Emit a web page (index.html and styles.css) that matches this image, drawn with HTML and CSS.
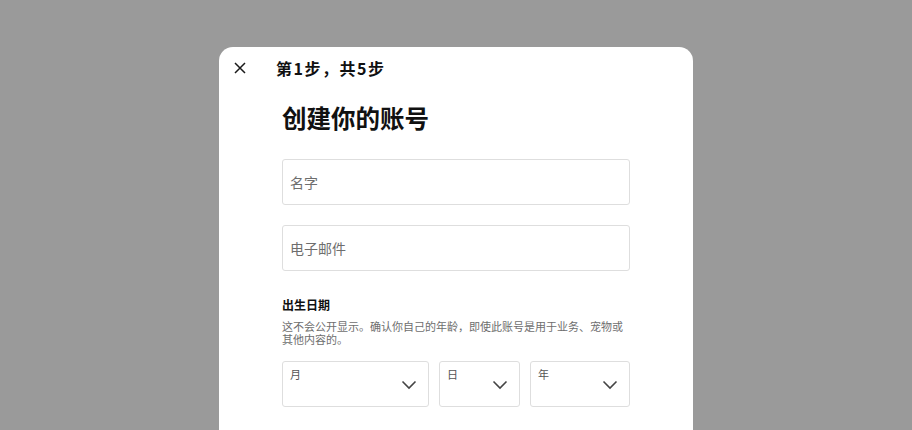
FILE: index.html
```html
<!DOCTYPE html>
<html lang="zh-CN">
<head>
<meta charset="utf-8">
<title>创建你的账号</title>
<link rel="stylesheet" href="styles.css">
</head>
<body>
<div class="modal">
  <div class="modal-header">
    <button class="close" aria-label="关闭">
      <svg viewBox="0 0 14 14" width="14" height="14"><path d="M2 2 L12 12 M12 2 L2 12" stroke="#1a1a1a" stroke-width="1.5" fill="none"/></svg>
    </button>
    <div class="step">第1步，共5步</div>
  </div>
  <div class="modal-body">
    <h1 class="title">创建你的账号</h1>
    <div class="field"><span class="placeholder">名字</span></div>
    <div class="field field-gap"><span class="placeholder">电子邮件</span></div>
    <div class="dob-label">出生日期</div>
    <p class="dob-desc">这不会公开显示。确认你自己的年龄，即使此账号是用于业务、宠物或其他内容的。</p>
    <div class="dob-row">
      <div class="select"><span class="select-label">月</span><svg class="chev" viewBox="0 0 16 10" width="16" height="10"><path d="M1.5 1.5 L8 8 L14.5 1.5" stroke="#444" stroke-width="1.6" fill="none"/></svg></div>
      <div class="select"><span class="select-label">日</span><svg class="chev" viewBox="0 0 16 10" width="16" height="10"><path d="M1.5 1.5 L8 8 L14.5 1.5" stroke="#444" stroke-width="1.6" fill="none"/></svg></div>
      <div class="select"><span class="select-label">年</span><svg class="chev" viewBox="0 0 16 10" width="16" height="10"><path d="M1.5 1.5 L8 8 L14.5 1.5" stroke="#444" stroke-width="1.6" fill="none"/></svg></div>
    </div>
  </div>
</div>
</body>
</html>
```
FILE: styles.css
```css
html, body {
  margin: 0;
  padding: 0;
  height: 100%;
  overflow: hidden;
}
body {
  background: #9a9a9a;
  font-family: "Noto Sans CJK SC", "Noto Sans", sans-serif;
  color: #0f1419;
  padding-top: 47px;
  box-sizing: border-box;
}
.modal {
  width: 474px;
  margin: 0 auto;
  height: 100%;
  background: #fff;
  border-radius: 14px 14px 0 0;
}
.modal-header {
  height: 42px;
  display: flex;
  align-items: center;
  padding-left: 13px;
}
.close {
  width: 16px;
  height: 16px;
  padding: 0;
  margin: 0;
  border: 0;
  background: none;
  display: flex;
  align-items: center;
  justify-content: center;
}
.step {
  margin-left: 28px;
  font-size: 16px;
  font-weight: 700;
  line-height: 20px;
  letter-spacing: 1.5px;
  color: #111;
}
.modal-body {
  padding: 0 63px;
}
.title {
  margin: 13px 0 25px;
  font-size: 24.5px;
  line-height: 32px;
  font-weight: 700;
  color: #111;
}
.field {
  height: 46px;
  border: 1px solid #dedede;
  border-radius: 3px;
  box-sizing: border-box;
  display: flex;
  align-items: center;
  padding-left: 7px;
}
.field-gap {
  margin-top: 20px;
}
.placeholder {
  font-size: 14px;
  color: #6e6e6e;
}
.dob-label {
  margin-top: 26px;
  font-size: 12px;
  line-height: 16px;
  font-weight: 700;
  color: #111;
}
.dob-desc {
  margin: 7px 0 15px;
  font-size: 11px;
  line-height: 13px;
  color: #6e6e6e;
}
.dob-row {
  display: grid;
  grid-template-columns: 147px 81px 1fr;
  gap: 10px;
}
.select {
  height: 46px;
  border: 1px solid #dedede;
  border-radius: 3px;
  box-sizing: border-box;
  position: relative;
  padding: 5px 7px;
}
.select-label {
  display: block;
  font-size: 11px;
  line-height: 14px;
  color: #555;
}
.chev {
  position: absolute;
  right: 11px;
  top: 18px;
}
```
